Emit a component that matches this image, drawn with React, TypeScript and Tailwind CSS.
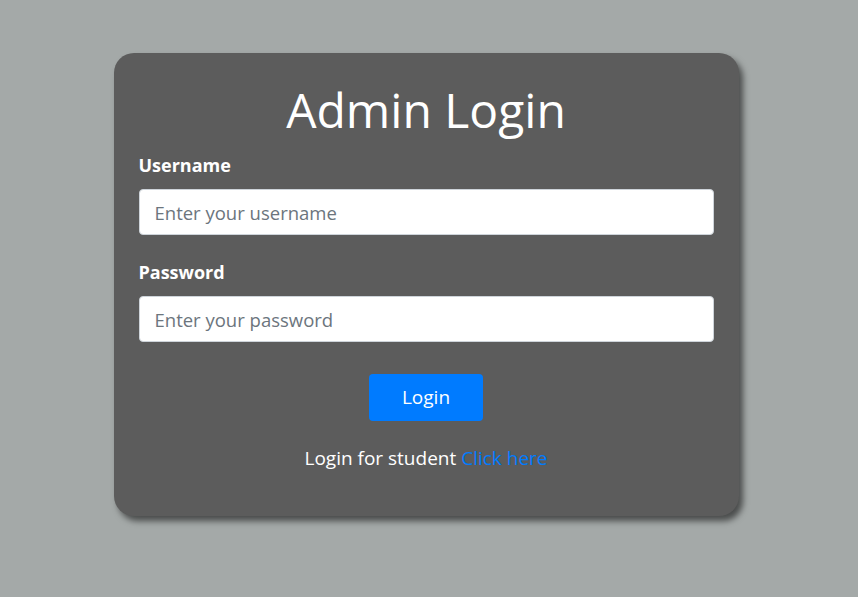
export default function App() {
  return (
    <div className="min-h-screen w-full bg-[#a4a9a8] flex justify-center pt-[53px] pr-[6px] font-['Open_Sans',sans-serif]">
      <div className="w-[625px] h-[463px] bg-[#5c5c5c] rounded-[20px] shadow-[4px_5px_6px_rgba(0,0,0,0.55)] px-[25px] pt-[22px] text-white">
        <h1 className="text-center text-[48px] leading-[70px] font-normal">Admin Login</h1>
        <div className="mt-[8px]">
          <label className="block text-[18px] font-bold leading-[24px]">Username</label>
          <input
            type="text"
            placeholder="Enter your username"
            className="mt-[12px] w-full h-[46px] bg-white rounded-[4px] border border-[#ced4da] px-[15px] text-[18.5px] text-[#495057] placeholder:text-[#6c757d] outline-none"
          />
        </div>
        <div className="mt-[25px]">
          <label className="block text-[18px] font-bold leading-[24px]">Password</label>
          <input
            type="password"
            placeholder="Enter your password"
            className="mt-[12px] w-full h-[46px] bg-white rounded-[4px] border border-[#ced4da] px-[15px] text-[18.5px] text-[#495057] placeholder:text-[#6c757d] outline-none"
          />
        </div>
        <div className="flex justify-center mt-[32px]">
          <button className="w-[114px] h-[47px] bg-[#007bff] rounded-[4px] text-[19px] text-white">Login</button>
        </div>
        <p className="text-center text-[19px] mt-[22px] leading-[30px]">
          Login for student <a href="#" className="text-[#007bff]">Click here</a>
        </p>
      </div>
    </div>
  )
}
